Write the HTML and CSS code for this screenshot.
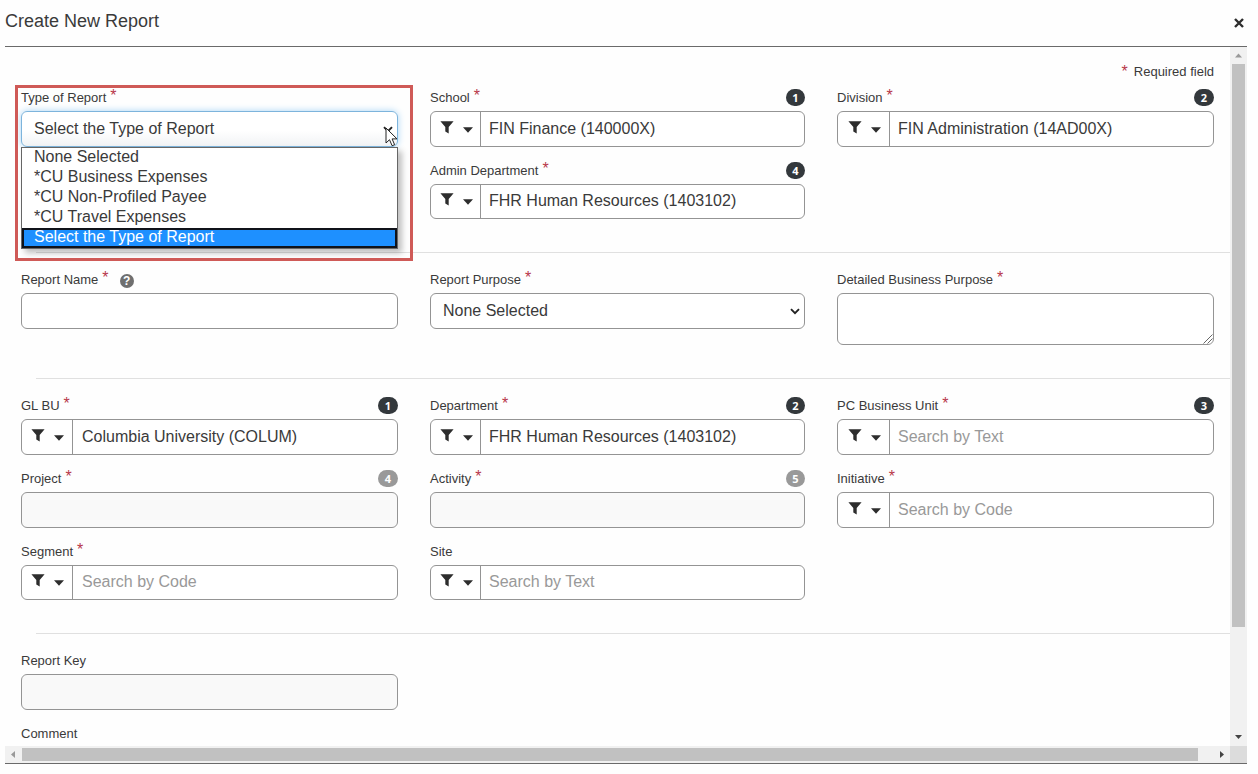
FILE: index.html
```html
<!DOCTYPE html>
<html lang="en">
<head>
<meta charset="utf-8">
<title>Create New Report</title>
<link rel="stylesheet" href="styles.css">
</head>
<body>
<svg class="sprite" aria-hidden="true">
  <symbol id="funnel" viewBox="0 0 14 13"><path d="M0.4 0.3h13.2L8.7 6v6.500L5.3 10.500V6z"/></symbol>
  <symbol id="caret" viewBox="0 0 10 6"><path d="M0 0.300h10L5 5.700z"/></symbol>
  <symbol id="chevron" viewBox="0 0 10 7"><path d="M1 1.200l4 4 4-4" fill="none" stroke="#222" stroke-width="1.900"/></symbol>
</svg>
<div class="dialog">
  <header class="dialog-header">
    <h1 class="dialog-title">Create New Report</h1>
    <svg class="close" viewBox="0 0 10 10"><path d="M1 1l8 8M9 1L1 9"/></svg>
  </header>
  <div class="viewport">
    <main class="content">
      <p class="required-note"><span class="star">*</span><span>Required field</span></p>

      <section class="section">
        <div class="field c1">
          <div class="label-row"><span>Type of Report</span><span class="star">*</span></div>
          <div class="control focused"><span class="select-text">Select the Type of Report</span><svg class="chevron"><use href="#chevron"/></svg></div>
          <ul class="menu">
            <li>None Selected</li>
            <li>*CU Business Expenses</li>
            <li>*CU Non-Profiled Payee</li>
            <li>*CU Travel Expenses</li>
            <li class="active">Select the Type of Report</li>
          </ul>
          <div class="highlight"></div>
          <svg class="pointer" viewBox="0 0 13 20"><path d="M1 1v15l3.500-3.300 2.600 6 2.500-1-2.500-5.800H12z"/></svg>
        </div>
        <div class="field c2">
          <div class="label-row"><span>School</span><span class="star">*</span><b class="badge">1</b></div>
          <div class="control"><span class="filter"><svg class="funnel"><use href="#funnel"/></svg><svg class="caret"><use href="#caret"/></svg></span><span class="value">FIN Finance (140000X)</span></div>
        </div>
        <div class="field c3">
          <div class="label-row"><span>Division</span><span class="star">*</span><b class="badge">2</b></div>
          <div class="control"><span class="filter"><svg class="funnel"><use href="#funnel"/></svg><svg class="caret"><use href="#caret"/></svg></span><span class="value">FIN Administration (14AD00X)</span></div>
        </div>
        <div class="field c2">
          <div class="label-row"><span>Admin Department</span><span class="star">*</span><b class="badge">4</b></div>
          <div class="control short"><span class="filter"><svg class="funnel"><use href="#funnel"/></svg><svg class="caret"><use href="#caret"/></svg></span><span class="value">FHR Human Resources (1403102)</span></div>
        </div>
      </section>

      <hr class="rule">

      <section class="section">
        <div class="field c1">
          <div class="label-row"><span>Report Name</span><span class="star">*</span><b class="help">?</b></div>
          <div class="control"></div>
        </div>
        <div class="field c2">
          <div class="label-row"><span>Report Purpose</span><span class="star">*</span></div>
          <div class="control"><span class="select-text">None Selected</span><svg class="chevron"><use href="#chevron"/></svg></div>
        </div>
        <div class="field c3">
          <div class="label-row"><span>Detailed Business Purpose</span><span class="star">*</span></div>
          <div class="control area"><svg class="grip" viewBox="0 0 10 10"><path d="M0.500 9.500l9-9M4.500 9.500l5-5"/></svg></div>
        </div>
      </section>

      <hr class="rule">

      <section class="section">
        <div class="field c1">
          <div class="label-row"><span>GL BU</span><span class="star">*</span><b class="badge">1</b></div>
          <div class="control"><span class="filter"><svg class="funnel"><use href="#funnel"/></svg><svg class="caret"><use href="#caret"/></svg></span><span class="value">Columbia University (COLUM)</span></div>
        </div>
        <div class="field c2">
          <div class="label-row"><span>Department</span><span class="star">*</span><b class="badge">2</b></div>
          <div class="control"><span class="filter"><svg class="funnel"><use href="#funnel"/></svg><svg class="caret"><use href="#caret"/></svg></span><span class="value">FHR Human Resources (1403102)</span></div>
        </div>
        <div class="field c3">
          <div class="label-row"><span>PC Business Unit</span><span class="star">*</span><b class="badge">3</b></div>
          <div class="control"><span class="filter"><svg class="funnel"><use href="#funnel"/></svg><svg class="caret"><use href="#caret"/></svg></span><span class="value hint">Search by Text</span></div>
        </div>
        <div class="field c1">
          <div class="label-row"><span>Project</span><span class="star">*</span><b class="badge muted">4</b></div>
          <div class="control disabled"></div>
        </div>
        <div class="field c2">
          <div class="label-row"><span>Activity</span><span class="star">*</span><b class="badge muted">5</b></div>
          <div class="control disabled"></div>
        </div>
        <div class="field c3">
          <div class="label-row"><span>Initiative</span><span class="star">*</span></div>
          <div class="control"><span class="filter"><svg class="funnel"><use href="#funnel"/></svg><svg class="caret"><use href="#caret"/></svg></span><span class="value hint">Search by Code</span></div>
        </div>
        <div class="field c1">
          <div class="label-row"><span>Segment</span><span class="star">*</span></div>
          <div class="control short"><span class="filter"><svg class="funnel"><use href="#funnel"/></svg><svg class="caret"><use href="#caret"/></svg></span><span class="value hint">Search by Code</span></div>
        </div>
        <div class="field c2">
          <div class="label-row"><span>Site</span></div>
          <div class="control short"><span class="filter"><svg class="funnel"><use href="#funnel"/></svg><svg class="caret"><use href="#caret"/></svg></span><span class="value hint">Search by Text</span></div>
        </div>
      </section>

      <hr class="rule">

      <section class="section">
        <div class="field c1">
          <div class="label-row"><span>Report Key</span></div>
          <div class="control disabled"></div>
        </div>
        <div class="field c1">
          <div class="label-row"><span>Comment</span></div>
        </div>
      </section>
    </main>
    <div class="vbar">
      <svg class="arrow faint" viewBox="0 0 17 17"><path d="M5 10.500h7l-3.500-4z"/></svg>
      <div class="vthumb"></div>
      <svg class="arrow" viewBox="0 0 17 17"><path d="M5 6h7l-3.500 4z"/></svg>
    </div>
    <div class="hbar">
      <svg class="arrow faint" viewBox="0 0 17 17"><path d="M10 5v7l-4-3.500z"/></svg>
      <div class="hthumb"></div>
      <svg class="arrow" viewBox="0 0 17 17"><path d="M7 5v7l4-3.500z"/></svg>
    </div>
    <div class="corner"></div>
  </div>
</div>
</body>
</html>
```

FILE: styles.css
```css
* { box-sizing: border-box; }

body {
  margin: 0;
  background: #fefefe;
  color: #3a3a3a;
  font: 13px/18px "Liberation Sans", Arial, sans-serif;
  overflow: hidden;
}

.sprite { display: none; }

.dialog { width: 1242px; margin-left: 5px; }

.dialog-header {
  display: flex;
  justify-content: space-between;
  height: 47px;
  border-bottom: 1px solid #6a6a6a;
}
.dialog-title { margin: 10px 0 0; font-size: 18px; line-height: 22px; font-weight: 400; }
.close { width: 10px; height: 10px; margin: 18px 3px 0 0; }
.close path { fill: none; stroke: #2d2d2d; stroke-width: 2.4; }

.viewport {
  display: grid;
  grid-template: 699px 17px / 1225px 17px;
  border-bottom: 1px solid #6a6a6a;
}

.content { overflow: hidden; padding: 16px 16px 0; }

.required-note {
  display: flex;
  justify-content: flex-end;
  gap: 6px;
  height: 18px;
  margin: 0 0 8px;
}

.section {
  display: grid;
  grid-template-columns: 377px 375px 377px;
  column-gap: 32px;
  row-gap: 15px;
}
.field { position: relative; }
.c1 { grid-column: 1; --filter: 51px; }
.c2 { grid-column: 2; --filter: 50px; }
.c3 { grid-column: 3; --filter: 52px; }

.label-row { display: flex; height: 22px; gap: 4px; white-space: nowrap; }
.star { color: #b8384a; font-size: 16px; line-height: 14px; }
.required-note .star { line-height: 18px; }

.badge {
  width: 20px;
  height: 17px;
  margin-left: auto;
  border-radius: 8.500px;
  background: #33383c;
  color: #fff;
  font: 700 11px/17px "Open Sans", sans-serif;
  text-align: center;
}
.c2 .badge { width: 19px; }
.badge.muted { background: #999; }

.help {
  width: 14px;
  height: 14px;
  margin: 3px 0 0 7px;
  border-radius: 50%;
  background: #6f6f6f;
  color: #fff;
  font-size: 12px;
  line-height: 14px;
  text-align: center;
}

.control {
  display: flex;
  height: 36px;
  border: 1px solid #949494;
  border-radius: 6px;
  background: #fff;
  font-size: 16px;
  line-height: 33px;
}
.control.short { height: 35px; margin-bottom: 1px; line-height: 31px; }
.control.area { height: 52px; margin-bottom: 1px; align-items: flex-end; justify-content: flex-end; }
.control.disabled { background: #f9f9f9; }
.control.focused {
  border-color: #7db4dc;
  background: linear-gradient(#fff 55%, #f1f3f5);
  box-shadow: 0 0 7px #a9d5f5;
}

.filter {
  display: flex;
  width: var(--filter);
  padding: 9px 0 0 9px;
  border-right: 1px solid #949494;
  gap: 9px;
  fill: #2d2d2d;
}
.short .filter { padding-top: 8px; }
.funnel { width: 14px; height: 13px; }
.caret { width: 10px; height: 6px; margin-top: 6px; }
.c3 .filter { padding-left: 10px; }
.value { padding-left: 9px; white-space: nowrap; }
.c2 .value { padding-left: 8px; }
.c3 .value { padding-left: 8px; }
.hint { color: #999; }

.select-text { flex: 1; padding-left: 12px; }
.chevron { width: 10px; height: 7px; margin: 14px 4px 0 0; }
.grip { width: 10px; height: 10px; }
.grip path { stroke: #666; stroke-width: 1; fill: none; }

.menu {
  position: absolute;
  z-index: 2;
  top: 58px;
  left: 0;
  width: 377px;
  height: 102px;
  margin: 0;
  padding: 0;
  list-style: none;
  border: 1px solid #666;
  background: #fff;
  box-shadow: 4px 4px 6px rgba(0, 0, 0, 0.25);
  font-size: 16px;
}
.menu li { height: 20px; padding-left: 12px; line-height: 17px; }
.menu .active {
  padding-left: 10px;
  border: 2px solid #10131a;
  background: #1e90ff;
  color: #fff;
  line-height: 14px;
}

.highlight {
  position: absolute;
  z-index: 3;
  top: -4px;
  left: -6px;
  width: 398px;
  height: 176px;
  border: 3px solid #cf5a57;
}

.pointer {
  position: absolute;
  z-index: 4;
  top: 38px;
  left: 364px;
  width: 13px;
  height: 20px;
}
.pointer path { fill: #fff; stroke: #222; stroke-width: 1; }

.rule {
  height: 1px;
  margin: 32px -16px 18px 15px;
  border: 0;
  background: #e0e0e0;
}

.vbar { display: flex; flex-direction: column; background: #f1f1f1; }
.vthumb { width: 13px; height: 563px; margin: 0 2px auto; background: #c1c1c1; }
.hbar { display: flex; background: #f1f1f1; }
.hthumb { width: 1176px; height: 13px; margin: 2px auto 2px 0; background: #c1c1c1; }
.arrow { width: 17px; height: 17px; fill: #444; }
.arrow.faint { fill: #999; }
.corner { background: #dcdcdc; }
```
